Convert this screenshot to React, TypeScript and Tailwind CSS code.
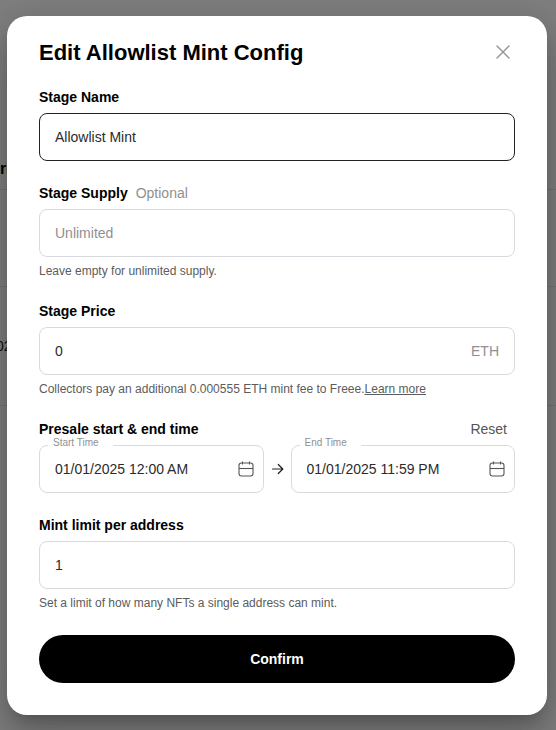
import type { InputHTMLAttributes, ReactNode } from "react";

const boxClass =
  "flex h-12 items-center rounded-lg border bg-white text-sm text-[#2b2b2b]";

function CalendarIcon() {
  return (
    <svg width="16" height="16" viewBox="0 0 16 16" fill="none" stroke="#555" aria-hidden="true">
      <rect x="1" y="2" width="14" height="13" rx="2.5" strokeWidth="1.1" />
      <path d="M1 7.5H15" strokeWidth="1.1" />
      <path d="M4.5 0.5V3.5M11.5 0.5V3.5" strokeWidth="1.1" />
    </svg>
  );
}

function ArrowIcon() {
  return (
    <svg
      width="13"
      height="12"
      viewBox="0 0 13 12"
      fill="none"
      stroke="#222"
      strokeWidth="1.2"
      strokeLinecap="round"
      strokeLinejoin="round"
      aria-hidden="true"
    >
      <path d="M1.5 6H11.8M7.3 1.5L11.8 6L7.3 10.5" />
    </svg>
  );
}

function Field({
  id,
  label,
  note,
  help,
  suffix,
  active = false,
  ...input
}: {
  id: string;
  label: string;
  note?: string;
  help?: ReactNode;
  suffix?: string;
  active?: boolean;
} & InputHTMLAttributes<HTMLInputElement>) {
  return (
    <div className="flex flex-col gap-1.5">
      <div className="flex gap-2 text-sm leading-5">
        <label htmlFor={id} className="font-bold text-black">
          {label}
        </label>
        {note && <span className="text-[#909090]">{note}</span>}
      </div>
      <div className={`${boxClass} px-[15px] ${active ? "border-[#222]" : "border-[#d9dadf]"}`}>
        <input
          id={id}
          type="text"
          className="min-w-0 flex-1 bg-transparent outline-none placeholder:text-[#909090]"
          {...input}
        />
        {suffix && <span className="text-[#909090]">{suffix}</span>}
      </div>
      {help && <p className="text-xs leading-4 text-[#5c5c5c]">{help}</p>}
    </div>
  );
}

function DateField({ id, label, value }: { id: string; label: string; value: string }) {
  return (
    <div className={`${boxClass} relative min-w-0 flex-1 border-[#d9dadf] pr-[9px] pl-[15px]`}>
      <label
        htmlFor={id}
        className="absolute -top-[9px] left-2 bg-white pr-3.5 pl-[5px] text-[10px] leading-3 text-[#909090]"
      >
        {label}
      </label>
      <input
        id={id}
        type="text"
        defaultValue={value}
        className="min-w-0 flex-1 bg-transparent outline-none"
      />
      <button type="button" aria-label={`Choose ${label}`}>
        <CalendarIcon />
      </button>
    </div>
  );
}

export default function App() {
  return (
    <div className="relative min-h-screen bg-white font-['Liberation_Sans',Arial,sans-serif]">
      <div className="text-sm text-[#222]">
        <div className="flex h-[190px] items-end border-b border-[#e6e6e6] pb-2 text-base font-bold text-black">
          re
        </div>
        <div className="h-[97px] border-b border-[#e6e6e6]" />
        <div className="flex h-[119px] items-center border-b border-[#e6e6e6]">
          <span className="-ml-1">02</span>
        </div>
      </div>

      <div className="absolute inset-0 flex items-start justify-center bg-black/50 pt-4 pr-0.5 pb-4">
        <section
          role="dialog"
          aria-modal="true"
          aria-labelledby="dialog-title"
          className="w-full max-w-[540px] rounded-[20px] bg-white px-8 pt-[21px] pb-8 shadow-[0_11px_15px_-7px_rgba(0,0,0,0.2),0_24px_38px_3px_rgba(0,0,0,0.14),0_9px_46px_8px_rgba(0,0,0,0.12)]"
        >
          <header className="mb-[18px] flex items-start justify-between">
            <h1 id="dialog-title" className="text-[22px] leading-8 font-bold text-black">
              Edit Allowlist Mint Config
            </h1>
            <button type="button" aria-label="Close" className="flex h-[30px] w-6 items-center justify-center">
              <svg
                width="14"
                height="14"
                viewBox="0 0 14 14"
                fill="none"
                stroke="#999"
                strokeWidth="1.5"
                strokeLinecap="round"
                aria-hidden="true"
              >
                <path d="M1 1L13 13M13 1L1 13" />
              </svg>
            </button>
          </header>

          <form>
            <div className="flex flex-col gap-[22px]">
              <Field id="stage-name" label="Stage Name" defaultValue="Allowlist Mint" active />
              <Field
                id="stage-supply"
                label="Stage Supply"
                note="Optional"
                placeholder="Unlimited"
                help="Leave empty for unlimited supply."
              />
              <Field
                id="stage-price"
                label="Stage Price"
                defaultValue="0"
                suffix="ETH"
                help={
                  <>
                    Collectors pay an additional 0.000555 ETH mint fee to Freee.
                    <a href="#learn-more" className="underline">
                      Learn more
                    </a>
                  </>
                }
              />
              <div role="group" aria-labelledby="presale-title" className="flex flex-col gap-1.5">
                <div className="flex justify-between text-sm leading-5">
                  <span id="presale-title" className="font-bold text-black">
                    Presale start &amp; end time
                  </span>
                  <button type="button" className="pr-2 text-[#555]">
                    Reset
                  </button>
                </div>
                <div className="flex items-center gap-[7px]">
                  <DateField id="start-time" label="Start Time" value="01/01/2025 12:00 AM" />
                  <ArrowIcon />
                  <DateField id="end-time" label="End Time" value="01/01/2025 11:59 PM" />
                </div>
              </div>
              <Field
                id="mint-limit"
                label="Mint limit per address"
                defaultValue="1"
                help="Set a limit of how many NFTs a single address can mint."
              />
            </div>
            <button
              type="button"
              className="mt-6 h-12 w-full rounded-full bg-black text-sm font-bold text-white"
            >
              Confirm
            </button>
          </form>
        </section>
      </div>
    </div>
  );
}
